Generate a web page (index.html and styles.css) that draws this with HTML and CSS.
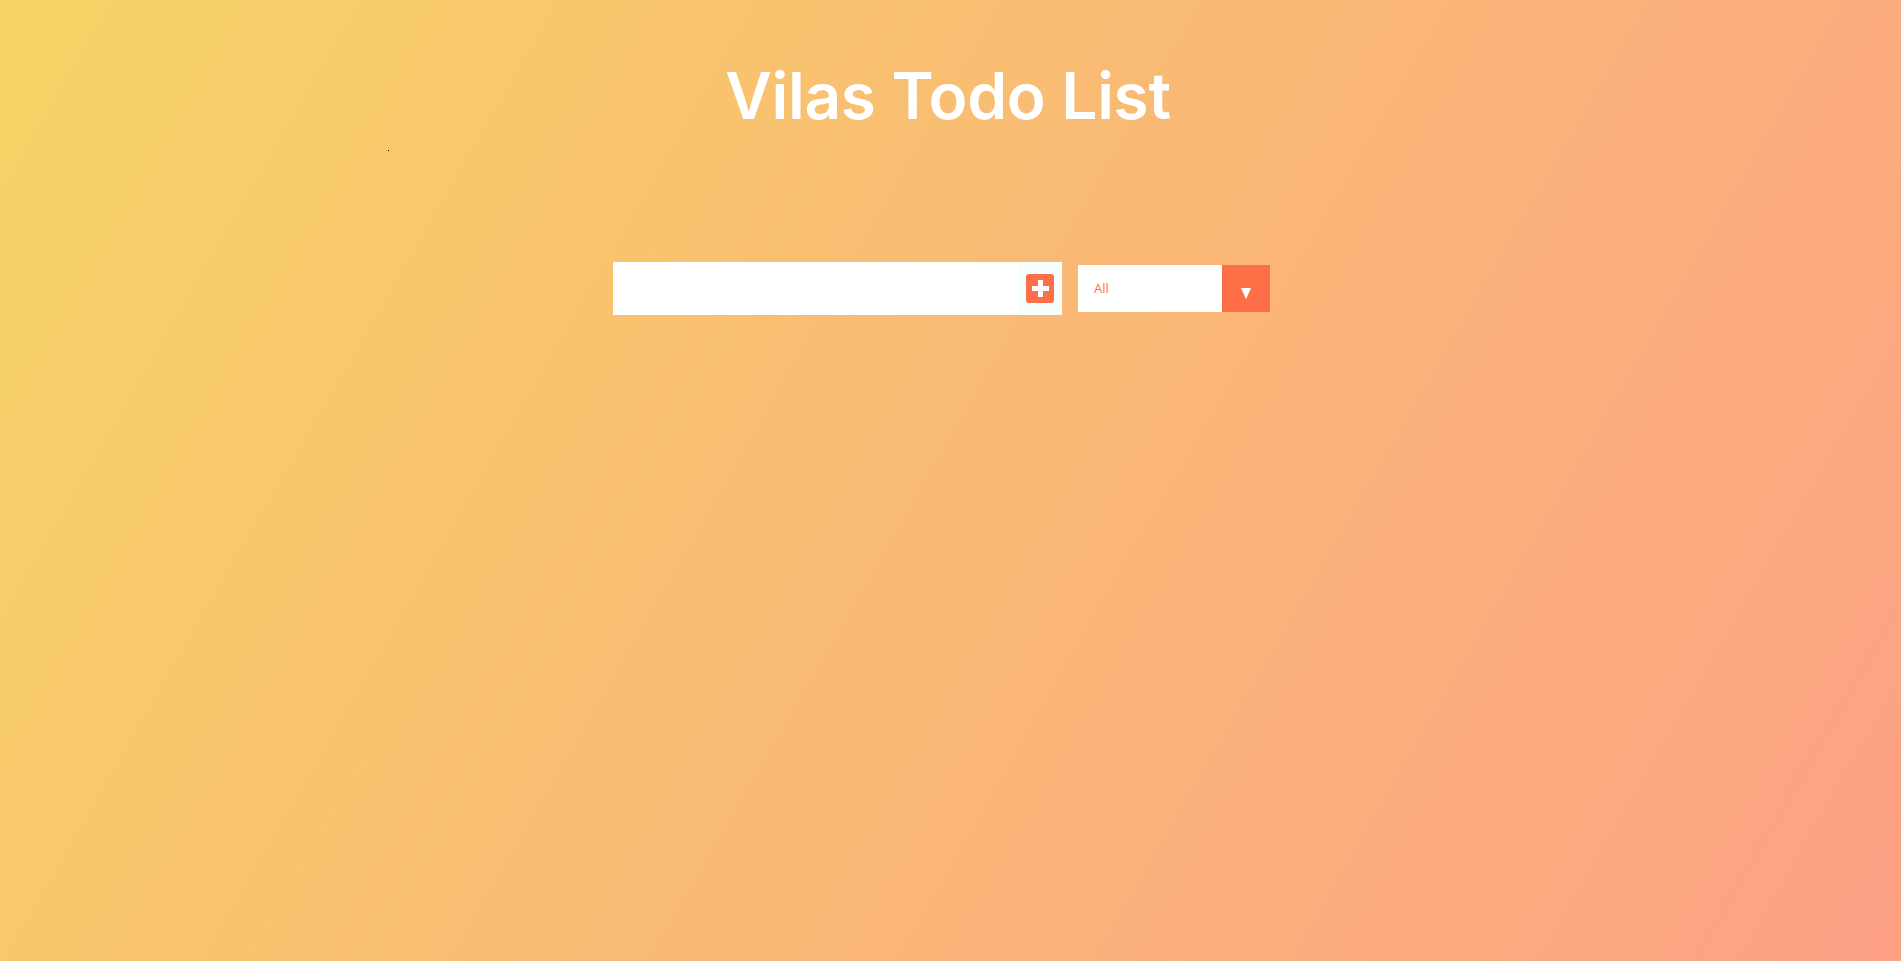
FILE: index.html
```html
<!DOCTYPE html>
<html lang="en">
<head>
<meta charset="UTF-8">
<title>Vilas Todo List</title>
<link rel="stylesheet" href="styles.css">
</head>
<body>
  <header class="header">
    <h1 class="title">Vilas Todo List</h1>
    <span class="stray-dot"></span>
  </header>
  <form class="todo-form">
    <div class="add-group">
      <input class="todo-input" type="text">
      <button class="todo-button" type="button" aria-label="Add">
        <svg class="plus-icon" viewBox="0 0 28 29" width="28" height="29">
          <rect x="0" y="0" width="28" height="29" rx="3" fill="#ff6f47"/>
          <rect x="6" y="12" width="17" height="5" fill="#ffffff"/>
          <rect x="12" y="6" width="5" height="17" fill="#ffffff"/>
        </svg>
      </button>
    </div>
    <div class="select">
      <span class="select-value">All</span>
      <span class="select-arrow">
        <svg viewBox="0 0 10 11" width="10" height="11"><polygon points="0,0 10,0 5,11" fill="#ffffff"/></svg>
      </span>
    </div>
  </form>
</body>
</html>
```
FILE: styles.css
```css
* { box-sizing: border-box; }
html, body { margin: 0; padding: 0; }
body {
  min-height: 100vh;
  background: linear-gradient(120deg, #f6d365 0%, #fda085 100%);
  font-family: Inter, "Noto Sans", sans-serif;
  position: relative;
}
.header {
  min-height: 192px;
  display: flex;
  justify-content: center;
  align-items: center;
  padding-right: 5px;
}
.title {
  margin: 0;
  color: #ffffff;
  font-size: 64px;
  font-weight: 600;
  letter-spacing: -0.3px;
  line-height: 1;
}
.stray-dot {
  position: absolute;
  left: 388px;
  top: 150px;
  width: 1px;
  height: 1px;
  background: #000;
}
.todo-form {
  min-height: 192px;
  display: flex;
  justify-content: center;
  align-items: center;
  padding-right: 2px;
}
.add-group {
  display: flex;
  height: 53px;
}
.todo-input {
  width: 405px;
  height: 53px;
  border: none;
  outline: none;
  background: #ffffff;
  padding: 8px;
  font-size: 32px;
}
.todo-button {
  width: 44px;
  height: 53px;
  border: none;
  padding: 0;
  background: #f7fffe;
  display: flex;
  align-items: center;
  justify-content: center;
}
.plus-icon { display: block; }
.select {
  margin: 0 16px;
  width: 192px;
  height: 47px;
  background: #ffffff;
  display: flex;
  align-items: center;
  justify-content: space-between;
}
.select-value {
  color: #ff6f47;
  font-size: 13px;
  padding-left: 16px;
  font-family: "Open Sans", sans-serif;
}
.select-arrow {
  width: 48px;
  height: 47px;
  background: #ff6f47;
  display: flex;
  justify-content: center;
  align-items: flex-start;
  padding-top: 23px;
}
.select-arrow svg { display: block; }
```
